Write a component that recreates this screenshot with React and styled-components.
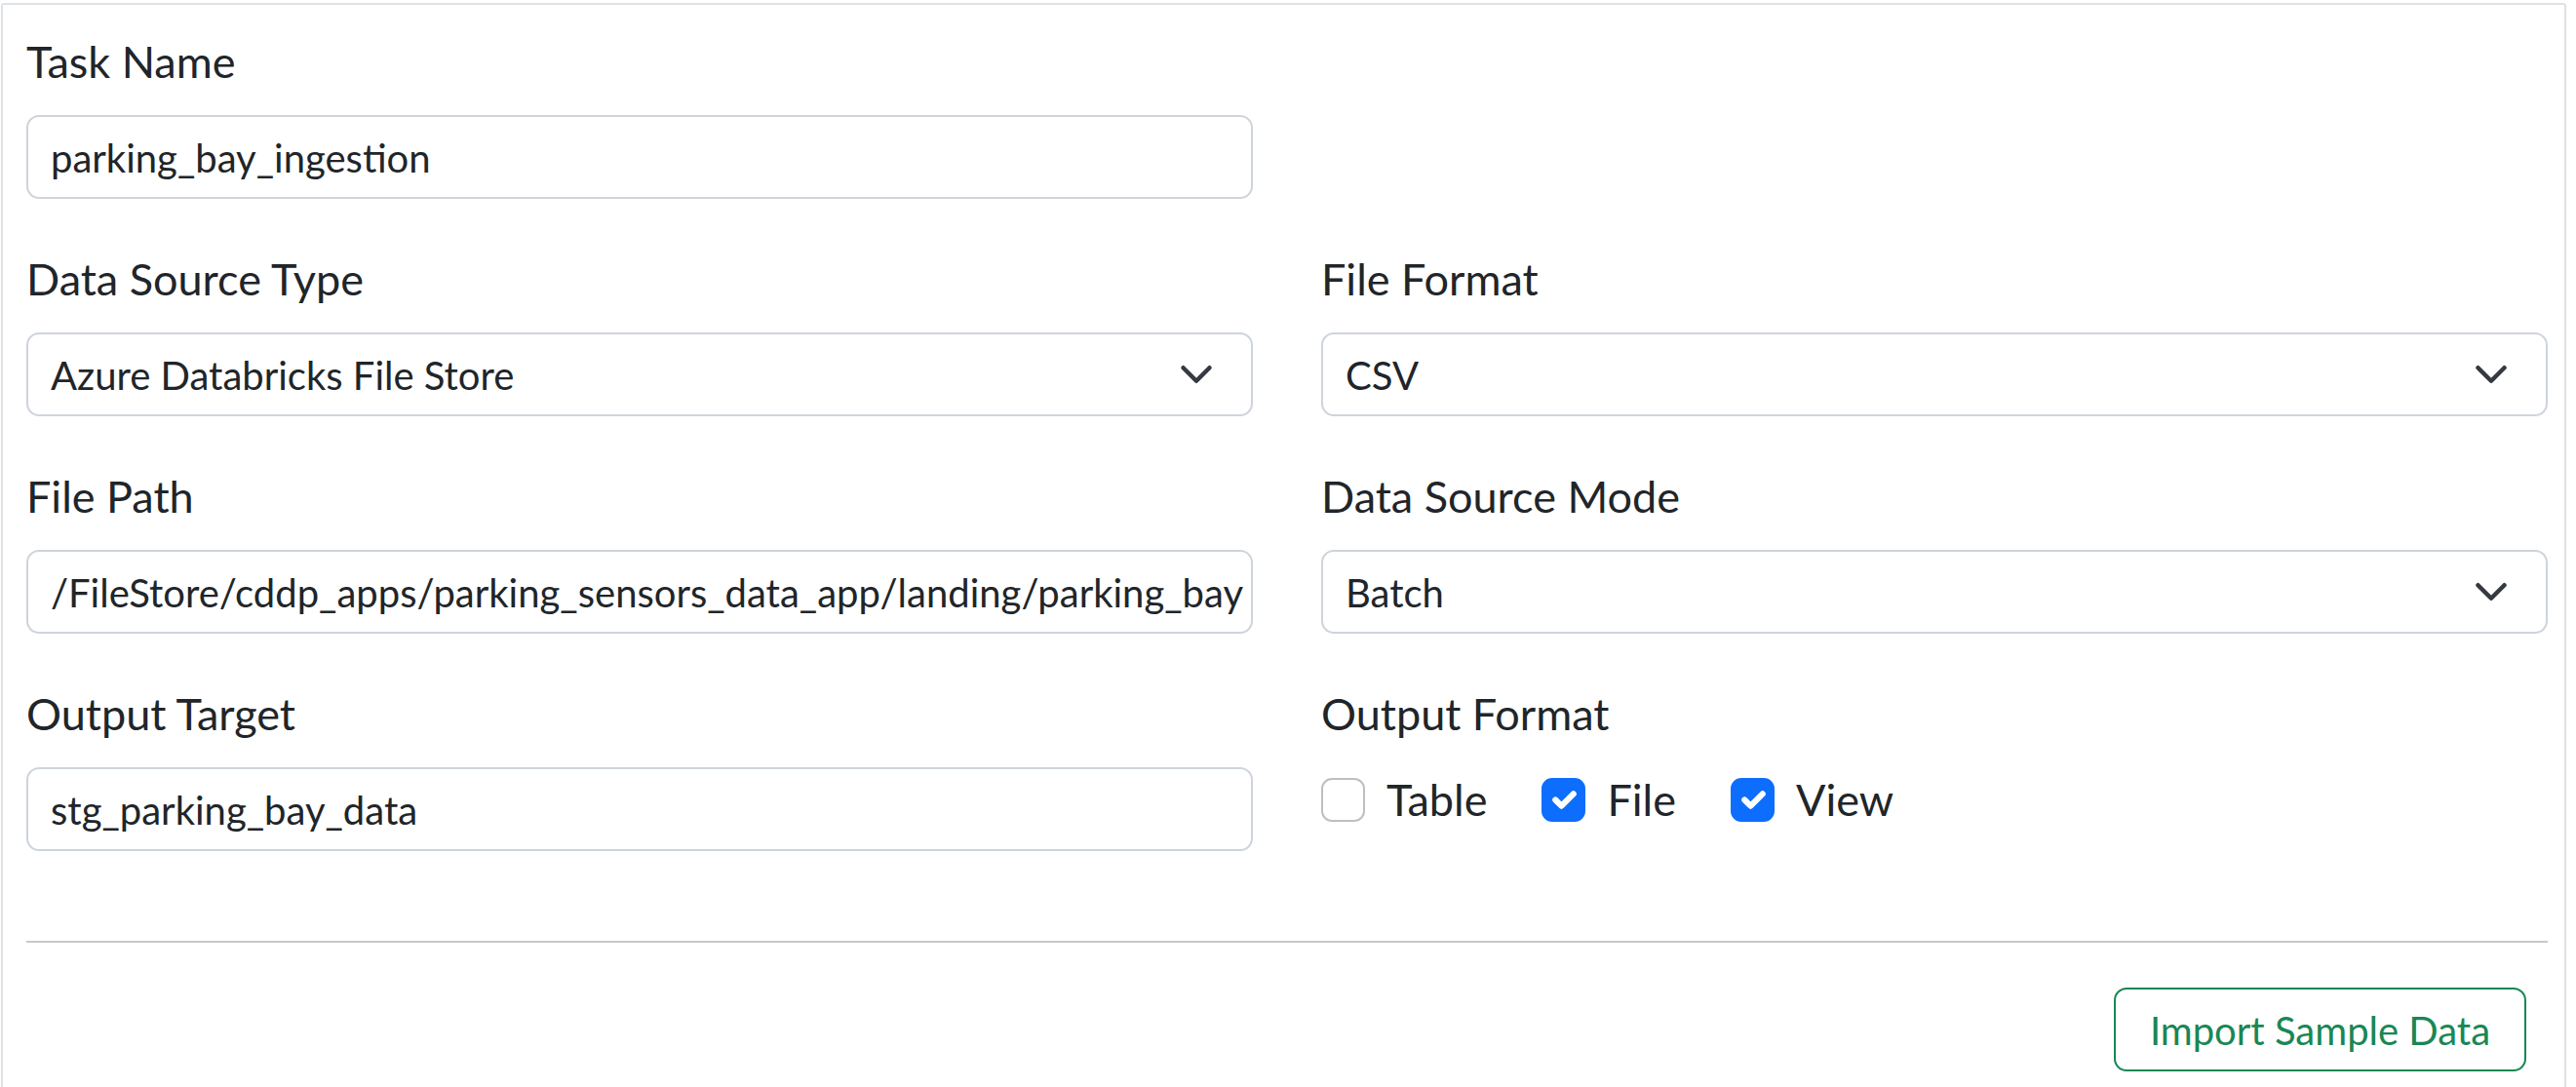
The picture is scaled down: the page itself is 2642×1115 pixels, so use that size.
import React from "react";
import styled, { createGlobalStyle } from "styled-components";

const GlobalStyle = createGlobalStyle`
  html, body {
    margin: 0;
    padding: 0;
    background: #fff;
  }
  body {
    font-family: Lato, "Open Sans", sans-serif;
    color: #212529;
  }
`;

const Chevron = () => (
  <svg width="36" height="36" viewBox="0 0 16 16" fill="none">
    <path
      d="m2 5 6 6 6-6"
      stroke="#343a40"
      strokeWidth="2"
      strokeLinecap="round"
      strokeLinejoin="round"
    />
  </svg>
);

const Check = () => (
  <svg width="41" height="41" viewBox="0 0 20 20" fill="none">
    <path
      d="m6 10 3 3 6-6"
      stroke="#fff"
      strokeWidth="3"
      strokeLinecap="round"
      strokeLinejoin="round"
    />
  </svg>
);

const outputFormats = [
  { label: "Table", checked: false },
  { label: "File", checked: true },
  { label: "View", checked: true },
];

const App = () => {
  return (
    <>
      <GlobalStyle />
      <Card>
        <FormGrid>
          <Field>
            <Label>Task Name</Label>
            <TextBox>
              <Value>parking_bay_ingestion</Value>
            </TextBox>
          </Field>
          <div />

          <Field>
            <Label>Data Source Type</Label>
            <SelectBox>
              <Value>Azure Databricks File Store</Value>
              <Chevron />
            </SelectBox>
          </Field>
          <Field>
            <Label>File Format</Label>
            <SelectBox>
              <Value>CSV</Value>
              <Chevron />
            </SelectBox>
          </Field>

          <Field>
            <Label>File Path</Label>
            <TextBox>
              <Value>/FileStore/cddp_apps/parking_sensors_data_app/landing/parking_bay</Value>
            </TextBox>
          </Field>
          <Field>
            <Label>Data Source Mode</Label>
            <SelectBox>
              <Value>Batch</Value>
              <Chevron />
            </SelectBox>
          </Field>

          <Field>
            <Label>Output Target</Label>
            <TextBox>
              <Value>stg_parking_bay_data</Value>
            </TextBox>
          </Field>
          <Field>
            <Label>Output Format</Label>
            <CheckRow>
              {outputFormats.map((f) => (
                <CheckItem key={f.label}>
                  <CheckBox checked={f.checked}>{f.checked && <Check />}</CheckBox>
                  <CheckText>{f.label}</CheckText>
                </CheckItem>
              ))}
            </CheckRow>
          </Field>
        </FormGrid>

        <Divider />

        <Footer>
          <OutlineButton>Import Sample Data</OutlineButton>
        </Footer>
      </Card>
    </>
  );
};

export default App;

const Card = styled.div`
  margin: 3px 10px 0 1px;
  min-height: 1130px;
  box-sizing: border-box;
  border: 2px solid #dee2e6;
  border-radius: 3px 3px 0 0;
  background: #fff;
  padding: 31px 17px 0 24px;
`;

const FormGrid = styled.div`
  display: grid;
  grid-template-columns: 1fr 1fr;
  column-gap: 70px;
  row-gap: 55px;
`;

const Field = styled.div`
  display: flex;
  flex-direction: column;
  min-width: 0;
`;

const Label = styled.label`
  font-size: 45px;
  line-height: 54px;
  margin-bottom: 28px;
  color: #212529;
`;

const TextBox = styled.div`
  height: 86px;
  box-sizing: border-box;
  border: 2px solid #ced4da;
  border-radius: 13px;
  background: #fff;
  padding: 2px 8px 0 23px;
  display: flex;
  align-items: center;
  font-size: 40px;
  color: #212529;
`;

const SelectBox = styled(TextBox)`
  justify-content: space-between;
  padding-right: 38px;

  svg {
    flex-shrink: 0;
    margin-top: -2px;
  }
`;

const Value = styled.span`
  flex: 1;
  min-width: 0;
  overflow: hidden;
  white-space: nowrap;
`;

const CheckRow = styled.div`
  display: flex;
  align-items: center;
  height: 67px;
`;

const CheckItem = styled.div`
  display: flex;
  align-items: center;
  margin-right: 56px;
`;

const CheckBox = styled.span`
  width: 45px;
  height: 45px;
  box-sizing: border-box;
  border-radius: 11px;
  border: 2px solid ${({ checked }) => (checked ? "#0d6efd" : "#bfbfbf")};
  background: ${({ checked }) => (checked ? "#0d6efd" : "#fff")};
  margin-right: 22px;
  display: flex;
  align-items: center;
  justify-content: center;
`;

const CheckText = styled.span`
  font-size: 45px;
  line-height: 67px;
  color: #212529;
`;

const Divider = styled.hr`
  border: none;
  height: 2px;
  background: #c8c8c8;
  margin: 92px 0 0;
`;

const Footer = styled.div`
  display: flex;
  justify-content: flex-end;
  padding-right: 22px;
  margin-top: 46px;
`;

const OutlineButton = styled.button`
  width: 423px;
  height: 86px;
  box-sizing: border-box;
  border: 2px solid #198754;
  border-radius: 13px;
  background: #fff;
  color: #198754;
  font-family: inherit;
  font-size: 40px;
  padding: 2px 0 0;
  cursor: pointer;
`;
